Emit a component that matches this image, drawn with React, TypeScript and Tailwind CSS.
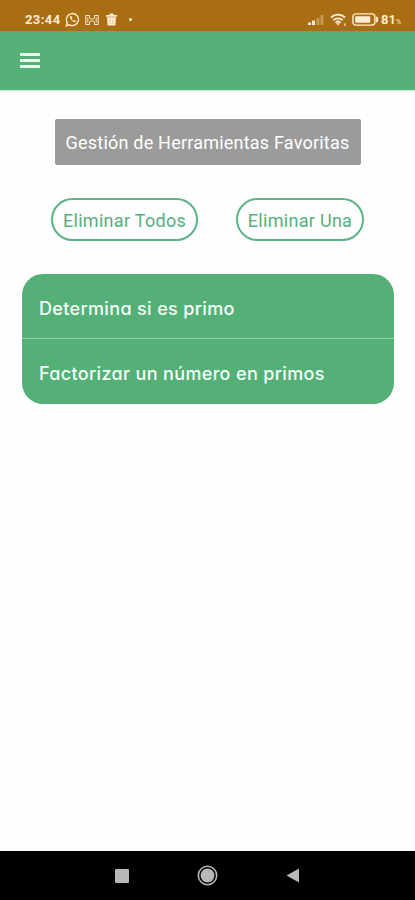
import { useState } from "react";

const FAVORITES = ["Determina si es primo", "Factorizar un número en primos"];

function StatusBar() {
  return (
    <div className="h-[31px] bg-[#a96e13] pt-2 pl-[25px] flex items-center text-[#fdecd2] font-['Roboto',sans-serif]">
      <span className="w-[36px] text-[13px] leading-4 font-bold tracking-[0.4px] whitespace-nowrap">23:44</span>
      <svg className="ml-1 shrink-0" width="15" height="15" viewBox="0 0 15 15" fill="none" stroke="currentColor" strokeWidth="1.4">
        <path d="M1.3 13.7l.9-3.2A6 6 0 1 1 4.500 12.800z" />
        <path d="M5.200 4.300c-1.200 1.500 2.300 6 4.900 6l1-1.400-1.800-1-.9.800c-.8-.4-1.400-1-1.700-1.800l.7-.8-.8-1.800z" fill="currentColor" stroke="none" />
      </svg>
      <svg className="ml-[5px] shrink-0" width="14" height="12" viewBox="0 0 14 12" fill="none" stroke="currentColor" strokeWidth="1">
        <path d="M4.500 1.500H.8v9h3.700V8l1-1h3l1 1v2.500h3.700v-9H9.500V4l-1 1h-3l-1-1zM2.800 3.500v5M11.200 3.500v5" />
      </svg>
      <svg className="ml-[7px] shrink-0" width="11" height="13" viewBox="0 0 11 13" fill="currentColor">
        <path d="M3.500.5h4V2H11v1.700H0V2h3.500zM1 4.300h9l-.6 8.200H1.600z" />
        <path d="M4.100 6v5M6.900 6v5" stroke="#e6c095" strokeWidth=".8" />
      </svg>
      <span className="ml-[12px] size-[3px] rounded-full bg-current" />

      <svg className="ml-[176px] shrink-0" width="16" height="12" viewBox="0 0 16 12" fill="currentColor">
        <path d="M0 8.500h3V11H0zM4 6.500h3V11H4z" />
        <path d="M8.500 3.800h3V11h-3zM12.500 1h3v10h-3z" opacity=".35" />
      </svg>
      <svg className="ml-[6px] shrink-0" width="17" height="14" viewBox="0 0 17 14" fill="none" stroke="currentColor" strokeWidth="1.8">
        <path d="M1 4.500a10 10 0 0 1 14 0M3.200 7.200a7 7 0 0 1 9.600 0M5.400 9.600a4 4 0 0 1 5.200 0" />
        <path d="M6 10.300h4l-2 2.200z" fill="currentColor" stroke="none" />
        <path d="M14.800 10.500v2.500" opacity=".7" />
      </svg>
      <svg className="ml-[5px] shrink-0" width="27" height="13" viewBox="0 0 27 13" fill="none" stroke="currentColor" strokeWidth="1.4">
        <rect x=".9" y=".9" width="22" height="11.200" rx="3" />
        <rect x="3.200" y="3.200" width="15" height="6.600" rx=".8" fill="currentColor" stroke="none" />
        <path d="M24.200 4c1.800.5 1.800 4.500 0 5" fill="currentColor" />
      </svg>
      <span className="ml-[2px] text-[13px] leading-4 font-bold">81</span>
      <span className="mt-1 text-[7px] leading-3">%</span>
    </div>
  );
}

function NavBar() {
  return (
    <nav className="mt-auto h-[49px] bg-black pl-[115px] flex items-center text-[#b8b8b8]">
      <button type="button" aria-label="Recientes" className="size-[14px] rounded-[1px] bg-current" />
      <button type="button" aria-label="Inicio" className="ml-[68px]">
        <svg width="21" height="21" viewBox="0 0 21 21" fill="none" stroke="currentColor">
          <circle cx="10.500" cy="10.500" r="9.200" strokeWidth="1.600" />
          <circle cx="10.500" cy="10.500" r="6.900" fill="currentColor" stroke="none" />
        </svg>
      </button>
      <button type="button" aria-label="Atrás" className="ml-[68px]">
        <svg width="14" height="15" viewBox="0 0 14 15" fill="currentColor">
          <path d="M.5 7.500L13 .5v14z" />
        </svg>
      </button>
    </nav>
  );
}

export default function App() {
  const [favorites, setFavorites] = useState(FAVORITES);

  return (
    <div className="h-[900px] w-[415px] bg-[#fefefe] flex flex-col overflow-hidden font-['Roboto',sans-serif]">
      <StatusBar />
      <header className="h-[59px] bg-[#54b077] pl-5 flex items-center shadow-[0_1px_1px_#cfe5d8]">
        <button type="button" aria-label="Menú" className="flex flex-col gap-[3px]">
          <span className="h-[3px] w-5 bg-[#e8faee]" />
          <span className="h-[3px] w-5 bg-[#e8faee]" />
          <span className="h-[3px] w-5 bg-[#e8faee]" />
        </button>
      </header>

      <main className="pt-[29px]">
        <h1 className="mx-auto h-[46px] w-[306px] rounded-[2px] bg-[#9b9b9b] pt-[2px] flex items-center justify-center text-lg tracking-[0.21px] text-white whitespace-nowrap">
          Gestión de Herramientas Favoritas
        </h1>

        <div className="mt-[33px] pl-[51px] flex gap-[38px]">
          <button
            type="button"
            onClick={() => setFavorites([])}
            className="h-[43px] w-[147px] rounded-full border-2 border-[#5cb386] pt-[2px] text-lg tracking-[0.3px] text-[#54b07f] whitespace-nowrap"
          >
            Eliminar Todos
          </button>
          <button
            type="button"
            onClick={() => setFavorites(favorites.slice(0, -1))}
            className="h-[43px] w-[128px] rounded-full border-2 border-[#5cb386] pt-[2px] text-lg tracking-[0.3px] text-[#54b07f] whitespace-nowrap"
          >
            Eliminar Una
          </button>
        </div>

        <ul className="mt-[33px] ml-[22px] w-[372px] rounded-[21px] bg-[#54b077] overflow-hidden divide-y divide-[#91cea8] font-['Inter',sans-serif]">
          {favorites.map((name) => (
            <li
              key={name}
              className="h-[65px] pl-[17px] pt-[5px] flex items-center text-lg font-medium tracking-[0.35px] text-[#f4fff8] whitespace-nowrap [font-feature-settings:'cv11']"
            >
              {name}
            </li>
          ))}
        </ul>
      </main>

      <NavBar />
    </div>
  );
}
